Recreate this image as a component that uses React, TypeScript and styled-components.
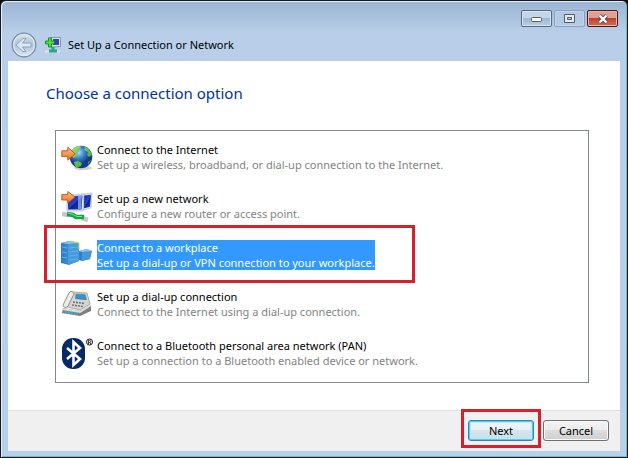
import React, { useState } from "react";
import styled, { createGlobalStyle, css } from "styled-components";

const GlobalStyle = createGlobalStyle`
  * { box-sizing: border-box; }
  body { margin: 0; background: #0b0d10; font-family: "Noto Sans", "Open Sans", sans-serif; font-size: 11px; line-height: 15px; }
  button { font: inherit; color: inherit; margin: 0; }
`;

const Frame = styled.div`
  min-height: 100vh;
  display: flex;
  flex-direction: column;
  padding: 0 6px 6px 7px;
  border: 1px solid #15181c;
  border-radius: 6px 6px 0 0;
  background: linear-gradient(#9ab4d2, #b9cfe9 32px, #b9d0ea);
  box-shadow: inset 1px 1px 0 #e6f0fa, inset -1px -1px 0 #5bc4d8;
`;

const CaptionBar = styled.header`
  display: flex;
  justify-content: flex-end;
  gap: 2px;
  height: 27px;
  padding: 9px 3px 0;
`;

const CaptionButton = styled.button<{ $kind?: "dim" | "close" }>`
  display: grid;
  place-items: center;
  width: 31px;
  height: 17px;
  padding: 0;
  border: 1px solid #56677f;
  border-radius: 2px;
  background: linear-gradient(#c3d5ea 45%, #9fb8d3 50%, #b7cde6);
  box-shadow: inset 0 0 0 1px #d6e4f3;
  ${(p) => p.$kind === "dim" && css`border-color: #8ba2bf; background: linear-gradient(#b3c9e2, #b4cbe5); box-shadow: inset 0 0 0 1px #c2d4e9;`}
  ${(p) => p.$kind === "close" && css`border-color: #4d1a1f; background: linear-gradient(#e0a093 45%, #c1402b 50%, #d2705a); box-shadow: inset 0 0 0 1px #e9b3a8;`}
`;

const TitleRow = styled.div`
  display: flex;
  align-items: center;
  height: 33px;
  padding: 0 3px;
`;

const BackButton = styled.button`
  width: 26px;
  height: 26px;
  padding: 0;
  border: 0;
  background: none;
`;

const TitleIcon = styled.span`
  display: flex;
  margin: 0 7px 0 8px;
`;

const Title = styled.span`
  color: #000;
`;

const Page = styled.main`
  flex: 1;
  display: flex;
  flex-direction: column;
  margin: 0 1px 0 0;
  background: #fff;
`;

const Content = styled.div`
  flex: 1;
  padding: 21px 31px 24px 38px;
`;

const Heading = styled.h1`
  margin: 0 0 26px;
  font-size: 15px;
  line-height: 22px;
  font-weight: 400;
  color: #003399;
`;

const OptionList = styled.ul`
  margin: 0 0 0 9px;
  padding: 11px 5px 14px;
  list-style: none;
  display: flex;
  flex-direction: column;
  gap: 19px;
  border: 1px solid #828790;
`;

const OptionItem = styled.li`
  position: relative;
  display: flex;
`;

const OptionButton = styled.button`
  display: flex;
  gap: 4px;
  height: 30px;
  padding: 0;
  border: 0;
  background: none;
  text-align: left;
  white-space: nowrap;
`;

const OptionIcon = styled.span`
  flex: none;
  width: 32px;
  height: 32px;
`;

const OptionText = styled.span<{ $selected: boolean }>`
  display: flex;
  flex-direction: column;
  color: ${(p) => (p.$selected ? "#fff" : "#000")};
  background: ${(p) => (p.$selected ? "#3399ff" : "transparent")};
`;

const OptionDetail = styled.span<{ $selected: boolean }>`
  color: ${(p) => (p.$selected ? "#fff" : "#838383")};
`;

const Mark = styled.span`
  position: absolute;
  border: 3px solid #d6212c;
  pointer-events: none;
`;

const OptionMark = styled(Mark)`
  top: -15px;
  bottom: -13px;
  left: -17px;
  width: 371px;
`;

const ButtonMark = styled(Mark)`
  inset: -11px -7px -7px;
`;

const Footer = styled.footer`
  display: flex;
  justify-content: flex-end;
  gap: 9px;
  height: 41px;
  padding: 9px 11px 0;
  border-top: 1px solid #dfdfdf;
  background: #f0f0f0;
`;

const ButtonSlot = styled.div`
  position: relative;
  display: flex;
  height: 21px;
`;

const PushButton = styled.button<{ $primary?: boolean }>`
  width: 66px;
  height: 21px;
  padding: 0;
  border: 1px solid #707070;
  border-radius: 3px;
  background: linear-gradient(#f3f3f3, #ebebeb 50%, #dddddd 50%, #cfcfcf);
  box-shadow: inset 0 0 0 1px #fbfbfb;
  ${(p) => p.$primary && css`border-color: #3c7fb1; background: linear-gradient(#f0f6f9, #e6f0f5 50%, #d5e5ed 50%, #cbdfe9); box-shadow: inset 0 0 0 1px #48d0f5, inset 0 0 0 2px #b9e8f6;`}
`;

const Arrow = () => (
  <path d="M.8 8.8h6V5.2l7.4 6.6-7.4 6.4v-3.600h-6z" fill="url(#orange)" stroke="#b3501a" strokeWidth=".9" />
);

const Defs = () => (
  <svg width="0" height="0" aria-hidden="true" display="block">
    <defs>
      <linearGradient id="orange" x2="0" y2="1"><stop stopColor="#ffc486" /><stop offset="1" stopColor="#ee6a1c" /></linearGradient>
      <radialGradient id="ocean" cx=".4" cy=".3"><stop stopColor="#9fe0fa" /><stop offset=".5" stopColor="#3a86cf" /><stop offset="1" stopColor="#153a86" /></radialGradient>
      <linearGradient id="land" x2="1" y2="1"><stop stopColor="#a4e36c" /><stop offset="1" stopColor="#2c9a2d" /></linearGradient>
      <linearGradient id="screen" x2="1" y2="1"><stop stopColor="#1226a8" /><stop offset=".5" stopColor="#2744c8" /><stop offset=".52" stopColor="#0e1d85" /><stop offset="1" stopColor="#2643b9" /></linearGradient>
      <linearGradient id="tower"><stop stopColor="#2d7cc4" /><stop offset="1" stopColor="#4ba4e2" /></linearGradient>
      <linearGradient id="glass" x2="0" y2="1"><stop stopColor="#d9e4ef" /><stop offset=".5" stopColor="#b0c3d6" /><stop offset="1" stopColor="#d9e9f6" /></linearGradient>
    </defs>
  </svg>
);

const GlobeIcon = () => (
  <svg width="32" height="32" viewBox="0 0 32 32">
    <ellipse cx="22" cy="26" rx="9" ry="2" fill="#bbb" opacity=".7" />
    <circle cx="20" cy="15" r="11.300" fill="url(#ocean)" />
    <path d="M10 10c2-4 6-6 9-6l1 2-3 1 1 3-3 2 1 2-3 2-3-2zM24 5c3 1 6 4 7 8l-3 2-2-2 1-3-4-2zM13 20l4-1 4 2-1 3-4 2c-1-1-3-3-3-6zM27 20l3-2-3 5z" fill="url(#land)" />
    <Arrow />
  </svg>
);

const NetworkIcon = () => (
  <svg width="32" height="32" viewBox="0 0 32 32">
    <path d="M21 3l10-1-1 15-8 2z" fill="#dde5ee" stroke="#a7b3c2" strokeWidth=".6" />
    <path d="M23 4.500l7-.8-1 12-6 1.500z" fill="url(#screen)" />
    <path d="M6 4l17-1-1 17H6z" fill="#e6ebf2" stroke="#9ca8ba" strokeWidth=".6" />
    <path d="M7 5.500l14.500-1-1 14H7z" fill="url(#screen)" />
    <path d="M17 5h4l-1 13h-3z" fill="#9db9f2" opacity=".7" />
    <path d="M1 23l7 1M21 27l6 2" fill="none" stroke="#c3c8cb" strokeWidth="4.500" />
    <path d="M6 23l6 1 3 2h8" fill="none" stroke="#17a34a" strokeWidth="4.500" />
    <path d="M7 22l5 1.500 4 2h5" fill="none" stroke="#7bdc92" />
    <path d="M.8 3.600h6V.5l7.400 5.600-7.400 6V9h-6z" fill="url(#orange)" stroke="#b3501a" strokeWidth=".9" />
  </svg>
);

const ServersIcon = () => (
  <svg width="32" height="32" viewBox="0 0 32 32">
    <path d="M0 3l8-2 10 2v18l-10 4-8-2z" fill="url(#tower)" />
    <path d="M7 4l11-1v18L7 25z" fill="#459bdc" />
    <path d="M8 1l10 2-11 1-7-1z" fill="#88c3ee" />
    <path d="M10 1l8 2v6" fill="none" stroke="#b5e64a" />
    <path d="M8 8l9-1M8 12l9-1M8 16l9-1M8 20l9-1M1 7l5 1M1 12l5 1M1 17l5 1" stroke="#67aee5" />
    <path d="M18 11l8-2 5 2-2 8-8 2-3-1z" fill="#2f80c6" />
    <path d="M21 12l9-1-1 8-8 2z" fill="#4498d9" />
    <path d="M18 11l8-2 5 2-10 1z" fill="#8bc7ef" />
  </svg>
);

const PhoneIcon = () => (
  <svg width="32" height="32" viewBox="0 0 32 32">
    <path d="M2 19l17 3 11-6v6l-11 5L1 24z" fill="#7c7e81" />
    <path d="M1 20l18 3 11-7" fill="none" stroke="#dededb" strokeWidth="2" />
    <path d="M3 17l8-14 15 1 3 11-10 6z" fill="#d6d7d4" stroke="#8c8d8b" strokeWidth=".7" />
    <path d="M2 16L8 4c1-2 5-2 5 1L7 17c-1 2-5 2-5-1z" fill="#ecece9" stroke="#777" strokeWidth=".8" />
    <path d="M15 5l9 .7 1.500 5-11-1z" fill="#3194ce" stroke="#526e82" strokeWidth=".6" />
    <path d="M12 13l12 1.500M11 16l11 1.500" stroke="#6f7376" strokeWidth="1.600" strokeDasharray="2 1" />
    <path d="M4 23l13 2" stroke="#4da5cd" strokeWidth="2.500" strokeDasharray="2 1" />
  </svg>
);

const BluetoothIcon = () => (
  <svg width="32" height="32" viewBox="0 0 32 32">
    <rect x="1" y="0" width="23" height="31" rx="11" fill="#062a63" />
    <path d="M6 10l13 11-6.500 6V4L19 10 6 21" fill="none" stroke="#fff" strokeWidth="2.600" />
    <circle cx="28.500" cy="4" r="3" fill="#fff" stroke="#111" />
    <path d="M27.500 6V2.500h1.200q1 0 1 1t-1 1h-1m1 0l1.200 1.500" fill="none" stroke="#111" strokeWidth=".8" />
  </svg>
);

const BackIcon = () => (
  <svg width="26" height="26" viewBox="0 0 26 26">
    <circle cx="13" cy="13" r="11.800" fill="url(#glass)" stroke="#788ba1" strokeWidth="1.300" />
    <circle cx="13" cy="13" r="10.500" fill="none" stroke="#e7f0f8" />
    <path d="M5 13l7-6.500h3L11.500 11H20v4h-8.500l3.500 4.500h-3z" fill="#dce7f2" stroke="#8fa4ba" />
  </svg>
);

const ConnectionIcon = () => (
  <svg width="16" height="16" viewBox="0 0 16 16">
    <path d="M6 .5h9.500v9L6 10z" fill="#dce5ee" stroke="#8696a6" />
    <path d="M8 2h6v6H8z" fill="#3149a5" />
    <path d="M0 14.500h15" stroke="#dce8e6" strokeWidth="2" />
    <path d="M8 10v3M4 14h8" stroke="#27a589" strokeWidth="3" />
    <path d="M3.500 1h3v3h3v3h-3v3h-3V7h-3V4h3z" fill="#51df35" stroke="#168426" strokeWidth=".9" />
  </svg>
);

const options = [
  { title: "Connect to the Internet", detail: "Set up a wireless, broadband, or dial-up connection to the Internet.", Icon: GlobeIcon },
  { title: "Set up a new network", detail: "Configure a new router or access point.", Icon: NetworkIcon },
  { title: "Connect to a workplace", detail: "Set up a dial-up or VPN connection to your workplace.", Icon: ServersIcon, marked: true },
  { title: "Set up a dial-up connection", detail: "Connect to the Internet using a dial-up connection.", Icon: PhoneIcon },
  { title: "Connect to a Bluetooth personal area network (PAN)", detail: "Set up a connection to a Bluetooth enabled device or network.", Icon: BluetoothIcon },
];

export default function App() {
  const [selected, setSelected] = useState(2);
  return (
    <>
      <GlobalStyle />
      <Frame>
        <Defs />
        <CaptionBar>
          <CaptionButton aria-label="Minimize">
            <svg width="12" height="7"><rect x=".5" y="2.500" width="10" height="4" rx="1" fill="#fff" stroke="#555b66" /></svg>
          </CaptionButton>
          <CaptionButton $kind="dim" aria-label="Maximize">
            <svg width="11" height="9"><path d="M.5.5h10v8H.5zM3.500 3.500h4v2h-4z" fill="#e4eaf1" fillRule="evenodd" stroke="#555b66" /></svg>
          </CaptionButton>
          <CaptionButton $kind="close" aria-label="Close">
            <svg width="12" height="10" viewBox="0 0 12 10"><path d="M2.500 1.500l7 7M9.500 1.500l-7 7" stroke="#584650" strokeWidth="4" /><path d="M2.500 1.500l7 7M9.500 1.500l-7 7" stroke="#fff" strokeWidth="2.400" /></svg>
          </CaptionButton>
        </CaptionBar>
        <TitleRow>
          <BackButton aria-label="Back"><BackIcon /></BackButton>
          <TitleIcon><ConnectionIcon /></TitleIcon>
          <Title>Set Up a Connection or Network</Title>
        </TitleRow>
        <Page>
          <Content>
            <Heading>Choose a connection option</Heading>
            <OptionList>
              {options.map(({ title, detail, Icon, marked }, i) => (
                <OptionItem key={title}>
                  <OptionButton aria-pressed={i === selected} onClick={() => setSelected(i)}>
                    <OptionIcon><Icon /></OptionIcon>
                    <OptionText $selected={i === selected}>
                      <span>{title}</span>
                      <OptionDetail $selected={i === selected}>{detail}</OptionDetail>
                    </OptionText>
                  </OptionButton>
                  {marked && <OptionMark />}
                </OptionItem>
              ))}
            </OptionList>
          </Content>
          <Footer>
            <ButtonSlot>
              <PushButton $primary>Next</PushButton>
              <ButtonMark />
            </ButtonSlot>
            <PushButton>Cancel</PushButton>
          </Footer>
        </Page>
      </Frame>
    </>
  );
}
